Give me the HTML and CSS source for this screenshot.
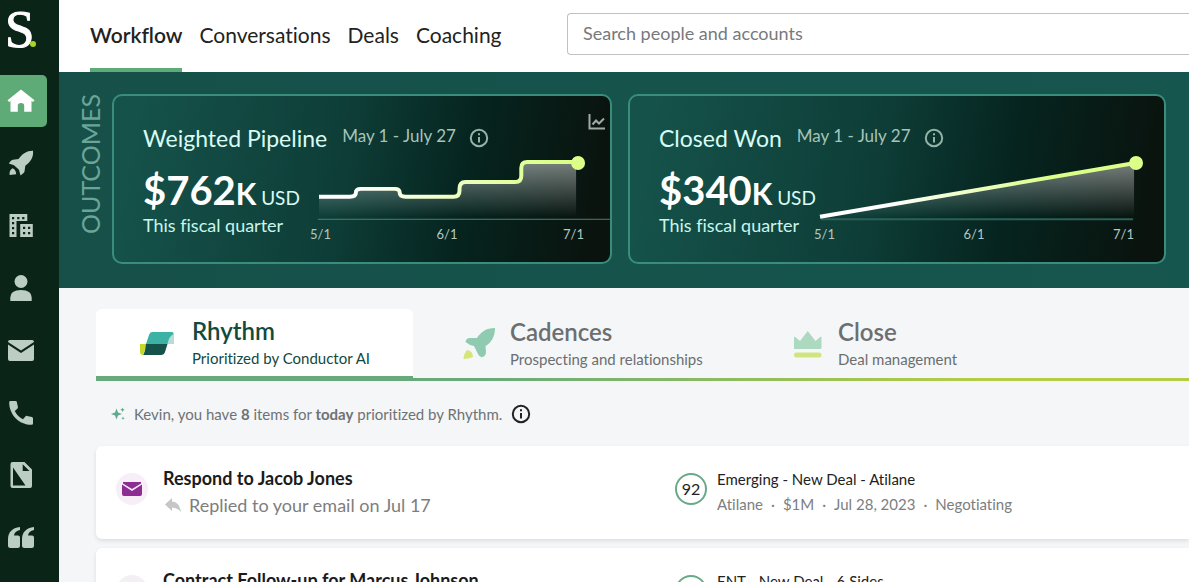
FILE: index.html
```html
<!DOCTYPE html>
<html lang="en">
<head>
<meta charset="utf-8">
<title>Workflow</title>
<meta name="viewport" content="width=device-width, initial-scale=1">
<link rel="stylesheet" href="styles.css">
</head>
<body>
<div class="app">
  <aside class="sidebar">
    <a class="logo" href="#" aria-label="Home page">S<span class="logo-dot"></span></a>
    <nav class="side-nav" aria-label="Sections">
      <a class="side-link is-active" href="#" aria-label="Home"><svg viewBox="0 0 28 28"><path d="M14 2.500 27.500 13.200 26 15 24.500 14V24.700H17.200V18.500Q17.200 16 14 16T10.800 18.500V24.700H3.500V14L2 15 .5 13.200Z"/></svg></a>
      <a class="side-link" href="#" aria-label="Cadences"><svg viewBox="0 0 28 28"><path d="M26 1.700C20 1.500 15.500 4.500 11.500 10L6 10.700Q4.500 11 3.500 12.200L1.800 14.400 7 16.300 12 20.800 13.500 26.600 16 24.600Q17.400 23.500 17.600 22L18.300 16.700C23.500 13 26.800 8 26 1.700Z"/><path d="M5.500 19.300Q8.800 20.500 9.200 25.200L2.600 26Q2 21.500 5.500 19.300Z"/></svg></a>
      <a class="side-link" href="#" aria-label="Accounts"><svg viewBox="0 0 28 28"><path fill-rule="evenodd" d="M2.500 2H20.300V9H9.500V25H2.500ZM5 5V7.200H7.200V5ZM10.200 5V7.200H12.400V5ZM15.200 5V7.200H17.400V5ZM5 10V12.200H7.200V10ZM5 15V17.200H7.200V15ZM5 20V22.200H7.200V20ZM13.200 12H25.800V25H13.200ZM16 14.800V17H18.200V14.800ZM21 14.800V17H23.200V14.800ZM16 20V22.200H18.200V20ZM21 20V22.200H23.200V20Z"/></svg></a>
      <a class="side-link" href="#" aria-label="People"><svg viewBox="0 0 28 28"><circle cx="14" cy="7.500" r="6.500"/><path d="M3.300 27V23.500Q3.300 16 14 16T24.700 23.500V27Z"/></svg></a>
      <a class="side-link" href="#" aria-label="Email"><svg viewBox="0 0 28 28"><path d="M3 3H25Q27 3 27 5L14 13.500 1 5Q1 3 3 3Z"/><path d="M1 7.500 14 16 27 7.500V22Q27 24 25 24H3Q1 24 1 22Z"/></svg></a>
      <a class="side-link" href="#" aria-label="Calls"><svg viewBox="0 0 28 28"><path d="M3.500 2H8.500Q9.700 2 9.900 3.200L10.900 8Q11 9 10.300 9.700L7.800 12Q10.500 17.500 16 20.200L18.400 17.400Q19 16.700 20 16.900L24.900 18Q26 18.300 26 19.400V24.400Q26 25.800 24.600 25.800C12 25.800 2.200 15.500 2.200 3.400Q2.200 2 3.500 2Z"/></svg></a>
      <a class="side-link" href="#" aria-label="Notes"><svg viewBox="0 0 28 28"><path fill-rule="evenodd" d="M5.500 0H17.500L25 7.500V24Q25 26 23 26H5.500Q3.500 26 3.500 24V2Q3.500 0 5.500 0ZM6 5.500V23.500H18.500ZM15.700 2.200V9H22.500Z"/></svg></a>
      <a class="side-link" href="#" aria-label="Quotes"><svg viewBox="0 0 28 28"><path d="M13 3V6Q7.500 7 7 11.500H11Q13 11.500 13 13.500V21.500Q13 24 10.500 24H3.500Q1 24 1 21.500V15.500Q1 4.500 13 3Z"/><path d="M27 3V6Q21.500 7 21 11.500H25Q27 11.500 27 13.500V21.500Q27 24 24.500 24H17.500Q15 24 15 21.500V15.500Q15 4.500 27 3Z"/></svg></a>
    </nav>
  </aside>

  <div class="page">
    <header class="topbar">
      <nav class="top-nav" aria-label="Main">
        <a class="top-link is-active" href="#">Workflow</a>
        <a class="top-link" href="#">Conversations</a>
        <a class="top-link" href="#">Deals</a>
        <a class="top-link" href="#">Coaching</a>
      </nav>
      <input class="search" type="search" placeholder="Search people and accounts" aria-label="Search people and accounts">
    </header>

    <section class="outcomes" aria-labelledby="outcomes-label">
      <h2 class="outcomes-label" id="outcomes-label">OUTCOMES</h2>
      <div class="outcome-cards">
        <article class="outcome">
          <div class="outcome-head">
            <h3 class="outcome-title">Weighted Pipeline</h3>
            <span class="outcome-date">May 1 - July 27</span>
            <svg class="info" viewBox="0 0 20 20"><circle cx="10" cy="10" r="8.200"/><path d="M10 9V14.500M10 5.300V7.300"/></svg>
          </div>
          <svg class="trend" viewBox="0 0 18 18"><path d="M1.500 1V15.500H17M4.500 11.500 8 7.500 11 10.500 16 5.500"/></svg>
          <div class="outcome-body">
            <div class="figure">
              <p class="amount">$762<span class="unit">K</span> <span class="currency">USD</span></p>
              <p class="period">This fiscal quarter</p>
            </div>
            <div class="chart">
              <svg class="chart-plot" viewBox="0 0 301 68">
                <defs>
                  <linearGradient id="fill-a" x1="0" y1="0" x2="0" y2="1"><stop offset="0" stop-color="#fff" stop-opacity=".45"/><stop offset="1" stop-color="#fff" stop-opacity="0"/></linearGradient>
                  <linearGradient id="line-a" gradientUnits="userSpaceOnUse" x1="40" y1="0" x2="240" y2="0"><stop offset="0" stop-color="#fff"/><stop offset="1" stop-color="#dcff8a"/></linearGradient>
                </defs>
                <path fill="url(#fill-a)" d="M9 43H40Q46 43 46 39T51 35H85Q90 35 90 39T96 43H144Q150 43 150 37V35Q150 28 156 28H206Q212 28 212 22V14Q212 8 218 8H267V63H9Z"/>
                <path stroke="#4e7d72" d="M8 65.500H301"/>
                <path fill="none" stroke="url(#line-a)" stroke-width="4" d="M9 43H40Q46 43 46 39T51 35H85Q90 35 90 39T96 43H144Q150 43 150 37V35Q150 28 156 28H206Q212 28 212 22V14Q212 8 218 8H269"/>
                <circle fill="#dcff8a" cx="269" cy="9" r="7"/>
              </svg>
              <div class="axis axis-inset"><span>5/1</span><span>6/1</span><span>7/1</span></div>
            </div>
          </div>
        </article>

        <article class="outcome">
          <div class="outcome-head">
            <h3 class="outcome-title">Closed Won</h3>
            <span class="outcome-date">May 1 - July 27</span>
            <svg class="info" viewBox="0 0 20 20"><circle cx="10" cy="10" r="8.200"/><path d="M10 9V14.500M10 5.300V7.300"/></svg>
          </div>
          <div class="outcome-body outcome-body-wide">
            <div class="figure">
              <p class="amount">$340<span class="unit">K</span> <span class="currency">USD</span></p>
              <p class="period">This fiscal quarter</p>
            </div>
            <div class="chart">
              <svg class="chart-plot" viewBox="0 0 351 68">
                <defs>
                  <linearGradient id="line-b" gradientUnits="userSpaceOnUse" x1="70" y1="0" x2="240" y2="0"><stop offset="0" stop-color="#fff"/><stop offset="1" stop-color="#dcff8a"/></linearGradient>
                </defs>
                <path fill="url(#fill-a)" d="M6 63 321 9V63Z"/>
                <path stroke="#2b6157" stroke-width="2" d="M7 65.500H320"/>
                <path stroke="url(#line-b)" stroke-width="4" d="M6 63 322 9"/>
                <circle fill="#dcff8a" cx="323" cy="9" r="7"/>
              </svg>
              <div class="axis axis-wide"><span>5/1</span><span>6/1</span><span>7/1</span></div>
            </div>
          </div>
        </article>
      </div>
    </section>

    <main class="work">
      <nav class="tabs" aria-label="Work queues">
        <a class="tab is-active" href="#">
          <svg class="tab-icon" viewBox="0 0 36 28"><path fill="#c5d92d" d="M1 15H8L4 26Q1 26 1 23Z"/><path fill="#b7ddd8" d="M30 4 35 5V15H28Z"/><path fill="#3bb2a4" d="M13 3H33Q35 3 34.500 5 30 7 28.500 15H7L10 6Q11 3 13 3Z"/><path fill="#15524a" d="M7 15H28.500L26 23Q25 26 22 26H4Q6 24 7 15Z"/></svg>
          <span class="tab-text"><strong class="tab-name">Rhythm</strong><span class="tab-note">Prioritized by Conductor AI</span></span>
        </a>
        <a class="tab" href="#">
          <svg class="tab-icon" viewBox="0 0 36 36"><path fill="#8fcbb0" d="M34 2C25 2 20 6 16 12H9Q5 12 4.500 16 8 19 13 20L17 28Q19 32 21.500 31 25 30 25 26L24.500 20C30 17 34 11 34 2Z"/><path fill="#d3e676" d="M6 24Q12 25 12 31 7 33 2.500 33 3 27 6 24Z"/></svg>
          <span class="tab-text"><strong class="tab-name">Cadences</strong><span class="tab-note">Prospecting and relationships</span></span>
        </a>
        <a class="tab" href="#">
          <svg class="tab-icon" viewBox="0 0 36 28"><path fill="#add9c1" d="M4 19V8Q4 5 6.500 8L10 11 17.700 1 25.500 11 29 8Q31.500 5 31.500 8V17.500Q31.500 19 30 19Z"/><rect fill="#d0e580" x="4" y="22.500" width="27.500" height="5" rx="2.500"/></svg>
          <span class="tab-text"><strong class="tab-name">Close</strong><span class="tab-note">Deal management</span></span>
        </a>
      </nav>

      <p class="summary">
        <svg class="spark" viewBox="0 0 14 14"><path d="M5.500 1.500 7 5.500 11 7 7 8.500 5.500 12.500 4 8.500 0 7 4 5.500ZM11.500 .5 12.200 2 13.700 2.700 12.200 3.400 11.500 5 10.800 3.400 9.300 2.700 10.800 2ZM12 9.500 12.500 10.800 13.800 11.300 12.500 11.800 12 13 11.500 11.800 10.200 11.300 11.500 10.800Z"/></svg>
        <span>Kevin, you have <b>8</b> items for <b>today</b> prioritized by Rhythm.</span>
        <svg class="info info-dark" viewBox="0 0 20 20"><circle cx="10" cy="10" r="8.200"/><path d="M10 9V14.500M10 5.300V7.300"/></svg>
      </p>

      <ul class="tasks">
        <li class="task">
          <span class="badge"><svg viewBox="0 0 20 14"><path d="M1 0H19L19 1.500 10 7 1 1.500Z"/><path d="M0 2.500 10 9 20 2.500V12Q20 14 18 14H2Q0 14 0 12Z"/></svg></span>
          <div class="task-main">
            <h3 class="task-title">Respond to Jacob Jones</h3>
            <p class="task-note"><svg class="reply" viewBox="0 0 16 14"><path d="M7 0V3.500Q14.500 4 16 14 12.500 9.500 7 9.500V13L0 6.500Z"/></svg>Replied to your email on Jul 17</p>
          </div>
          <span class="score">92</span>
          <div class="deal">
            <p class="deal-name">Emerging - New Deal - Atilane</p>
            <p class="deal-meta"><span>Atilane</span><i>·</i><span>$1M</span><i>·</i><span>Jul 28, 2023</span><i>·</i><span>Negotiating</span></p>
          </div>
        </li>
        <li class="task">
          <span class="badge badge-plain"></span>
          <div class="task-main">
            <h3 class="task-title">Contract Follow-up for Marcus Johnson</h3>
          </div>
          <span class="score"></span>
          <div class="deal">
            <p class="deal-name">ENT - New Deal - 6 Sides</p>
          </div>
        </li>
      </ul>
    </main>
  </div>
</div>
</body>
</html>
```
FILE: styles.css
```css
* { box-sizing: border-box; }
body {
  margin: 0;
  font-family: Lato, "Liberation Sans", sans-serif;
  font-variant-ligatures: none;
  color: #222;
  background: #f4f6f8;
}
h2, h3, p, ul { margin: 0; padding: 0; }
a { color: inherit; text-decoration: none; }
svg { display: block; flex: none; }

.app { display: flex; height: 100vh; overflow: hidden; }

/* Sidebar */
.sidebar {
  flex: none;
  width: 59px;
  padding-bottom: 18px;
  display: flex;
  flex-direction: column;
  background: #0a2418;
}
.logo {
  height: 75px;
  padding-left: 5px;
  display: flex;
  align-items: baseline;
  font: 53px/58px "Liberation Serif", serif;
  -webkit-text-stroke: 1px #fff;
  color: #fff;
}
.logo-dot { width: 6px; height: 6px; margin-left: -4px; border-radius: 50%; background: #a9d626; }
.side-nav { flex: 1; display: flex; flex-direction: column; justify-content: space-between; }
.side-link {
  width: 47px;
  height: 52px;
  padding-left: 7px;
  display: flex;
  align-items: center;
  border-radius: 0 5px 5px 0;
}
.side-link svg { width: 28px; height: 28px; fill: #bccdc4; }
.side-link.is-active { background: #5fab78; }
.side-link.is-active svg { fill: #fff; }

.page { flex: 1; min-width: 0; }

/* Top bar */
.topbar { height: 72px; padding-left: 31px; display: flex; align-items: flex-start; background: #fff; }
.top-nav { width: 477px; height: 72px; flex: none; display: flex; gap: 17px; }
.top-link { border-bottom: 4px solid transparent; font-size: 21px; line-height: 70px; height: 72px; }
.top-link.is-active { font-weight: 600; border-color: #5fab78; }
.search {
  flex: 1;
  min-width: 0;
  height: 42px;
  margin-top: 13px;
  padding: 0 15px 2px;
  border: 1px solid #bfc2c5;
  border-right: 0;
  border-radius: 4px 0 0 4px;
  font: 18px Lato, sans-serif;
  background: #fff;
}
.search::placeholder { color: #77797c; opacity: 1; }

/* Outcomes */
.outcomes { padding: 22px 23px 24px 18px; display: flex; gap: 9px; background: linear-gradient(90deg, #165049, #15564e); }
.outcomes-label {
  width: 26px;
  height: 142px;
  writing-mode: vertical-rl;
  transform: rotate(180deg);
  text-align: right;
  font-size: 25px;
  line-height: 26px;
  font-weight: 400;
  color: #6aa598;
}
.outcome-cards { flex: 1; display: grid; grid-template-columns: 500fr 538fr; gap: 16px; }
.outcome {
  position: relative;
  min-width: 0;
  height: 170px;
  padding: 28px 0 0 29px;
  border: 2px solid #3a8d7b;
  border-radius: 10px;
  background: linear-gradient(100deg, #15524a 5%, #0e3d37 46%, #06241f 70%, #0a130e 96%);
}
.outcome-head { display: flex; align-items: center; height: 28px; color: #d9fbf4; }
.outcome-title { font-size: 23px; line-height: 28px; font-weight: 400; }
.outcome-date { margin: 0 13px 4px 15px; font-size: 17px; line-height: 24px; color: #a5c4ba; }
.info { width: 20px; height: 20px; fill: none; stroke: #93b3a7; stroke-width: 2; }
.trend { position: absolute; top: 17px; right: 4px; width: 18px; height: 18px; fill: none; stroke: #a2aaa6; stroke-width: 2; }
.outcome-body { padding-top: 2px; display: grid; grid-template-columns: 167px 1fr; }
.outcome-body-wide { grid-template-columns: 155px 1fr; }
.figure { padding-top: 14px; white-space: nowrap; }
.amount { font-size: 40px; line-height: 44px; font-weight: 700; color: #fff; }
.unit { font-size: 30px; line-height: 30px; }
.currency { margin-left: -5px; font-size: 19px; line-height: 20px; font-weight: 400; color: #d9fbf4; }
.period { font-size: 18px; line-height: 26px; color: #c9f5ec; }
.chart { min-width: 0; }
.chart-plot { width: 100%; height: auto; }
.axis { display: flex; justify-content: space-between; margin-top: 4px; font-size: 13px; line-height: 16px; color: #b3c9c1; }
.axis-inset { padding-right: 26px; }
.axis-wide { padding-right: 30px; }

/* Queue tabs */
.work { padding: 21px 0 0 37px; }
.tabs {
  height: 72px;
  display: flex;
  border-bottom: 3px solid;
  border-image: linear-gradient(90deg, #68a97c 35%, #b3cd45 80%) 1;
}
.tab { height: 69px; padding-left: 43px; display: flex; align-items: center; gap: 17px; color: #6c6e70; }
.tab:nth-child(2) { width: 330px; padding-left: 48px; gap: 13px; }
.tab:nth-child(3) { padding-left: 47px; gap: 12px; }
.tab.is-active {
  width: 317px;
  height: 72px;
  border-bottom: 5px solid #68a97c;
  border-radius: 6px 6px 0 0;
  background: #fff;
  color: #124a3c;
}
.tab-icon { width: 36px; }
.tab-text { display: flex; flex-direction: column; white-space: nowrap; }
.tab-name { font-size: 24px; line-height: 30px; font-weight: 600; }
.tab-note { font-size: 15px; line-height: 24px; }

.summary { height: 65px; padding-left: 15px; display: flex; align-items: center; gap: 9px; font-size: 15px; color: #6f7275; }
.spark { width: 14px; height: 14px; fill: #5fab8c; }
.info-dark { stroke: #222; }

/* Tasks */
.tasks { list-style: none; display: grid; gap: 9px; }
.task {
  height: 93px;
  padding: 17px 0 0 20px;
  display: grid;
  grid-template-columns: 47px 512px 42px 1fr;
  border-radius: 6px 0 0 6px;
  background: #fff;
  box-shadow: 0 2px 4px #0000001a;
}
.badge { width: 32px; height: 32px; margin-top: 10px; display: grid; place-items: center; border-radius: 50%; background: #f7eef8; }
.badge svg { width: 20px; height: 14px; fill: #8d2c93; }
.badge-plain { background: #f3eff4; }
.task-title { font-size: 18px; line-height: 30px; font-weight: 700; color: #1b1b1b; }
.task-note { display: flex; align-items: center; gap: 8px; padding-left: 2px; font-size: 18px; line-height: 24px; color: #7c7e80; }
.reply { width: 16px; height: 14px; fill: #c4c6c8; }
.score {
  width: 32px;
  height: 32px;
  margin-top: 10px;
  border: 2px solid #68a98a;
  border-radius: 50%;
  text-align: center;
  font-size: 16px;
  line-height: 28px;
}
.deal { padding-top: 4px; font-size: 15px; line-height: 25px; white-space: nowrap; }
.deal-meta { display: flex; gap: 8px; color: #7c7e80; }
.deal-meta i { font-style: normal; }
```
